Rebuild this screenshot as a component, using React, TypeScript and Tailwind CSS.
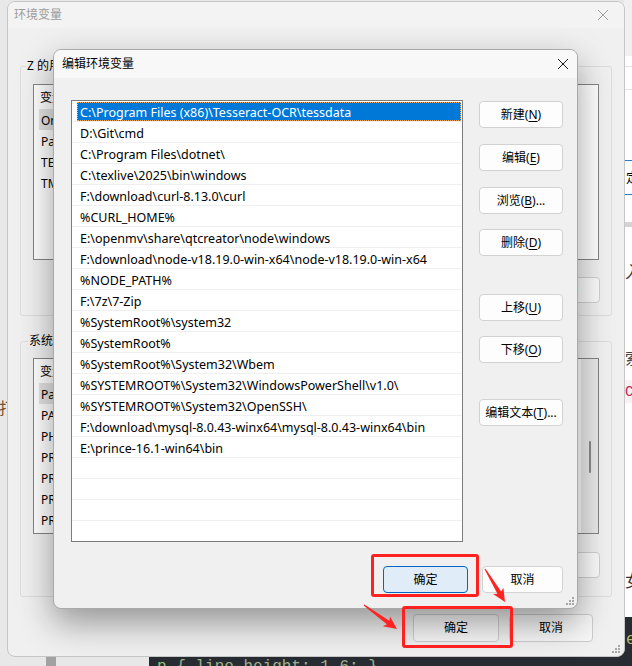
import React from 'react';

// path list of the edit dialog
const paths = [
  'C:\\Program Files (x86)\\Tesseract-OCR\\tessdata',
  'D:\\Git\\cmd',
  'C:\\Program Files\\dotnet\\',
  'C:\\texlive\\2025\\bin\\windows',
  'F:\\download\\curl-8.13.0\\curl',
  '%CURL_HOME%',
  'E:\\openmv\\share\\qtcreator\\node\\windows',
  'F:\\download\\node-v18.19.0-win-x64\\node-v18.19.0-win-x64',
  '%NODE_PATH%',
  'F:\\7z\\7-Zip',
  '%SystemRoot%\\system32',
  '%SystemRoot%',
  '%SystemRoot%\\System32\\Wbem',
  '%SYSTEMROOT%\\System32\\WindowsPowerShell\\v1.0\\',
  '%SYSTEMROOT%\\System32\\OpenSSH\\',
  'F:\\download\\mysql-8.0.43-winx64\\mysql-8.0.43-winx64\\bin',
  'E:\\prince-16.1-win64\\bin',
  '',
  '',
  '',
  '',
];

const userVars = ['OneDrive', 'Path', 'TEMP', 'TMP'];
const sysVars = ['Path', 'PATHEXT', 'PHP_HOME', 'PROCESSOR_ARCHITECTURE', 'PROCESSOR_IDENTIFIER', 'PROCESSOR_LEVEL', 'PROCESSOR_REVISION'];

const CloseX = ({ color }: { color: string }) => (
  <svg width="12" height="12" viewBox="0 0 12 12" className={color}>
    <path d="M1 1L11 11M11 1L1 11" stroke="currentColor" strokeWidth="1" fill="none" />
  </svg>
);

const Grip = () => (
  <svg width="8" height="8" viewBox="0 0 8 8">
    <g fill="#a6a6a6">
      <rect x="6" y="0" width="2" height="2" />
      <rect x="3" y="3" width="2" height="2" />
      <rect x="6" y="3" width="2" height="2" />
      <rect x="0" y="6" width="2" height="2" />
      <rect x="3" y="6" width="2" height="2" />
      <rect x="6" y="6" width="2" height="2" />
    </g>
  </svg>
);

const Btn = ({ text, k, tail = '', className = '' }: { text: string; k?: string; tail?: string; className?: string }) => (
  <div className={`flex items-center justify-center rounded-[4px] border text-[12px] leading-none ${className}`}>
    {text}
    {k && (
      <>
        (<span className="underline underline-offset-2">{k}</span>)
      </>
    )}
    {tail}
  </div>
);

const Arrow = ({ x1, y1, x2, y2 }: { x1: number; y1: number; x2: number; y2: number }) => {
  const L = Math.hypot(x2 - x1, y2 - y1);
  const ang = (Math.atan2(y2 - y1, x2 - x1) * 180) / Math.PI;
  const pts = `0,-0.6 ${L - 11},-2.2 ${L - 13},-6 ${L},0 ${L - 13},6 ${L - 11},2.2 0,0.6`;
  return <polygon points={pts} fill="#ff2424" transform={`translate(${x1} ${y1}) rotate(${ang})`} />;
};

const VarList = ({ rows, selected, scroll }: { rows: string[]; selected: number; scroll?: boolean }) => (
  <div className="h-[176px] border border-[#858585] bg-white flex overflow-hidden">
    <div className="flex-1 flex flex-col">
      <div className="h-[24px] shrink-0 flex items-center pl-[6px] pt-[1px]">
        <span className="w-[180px]">变量</span>
        <span>值</span>
      </div>
      {rows.map((r, i) => (
        <div key={r} className="h-[21px] shrink-0 flex pl-[5px]">
          <div className={`flex items-center pl-[2px] pt-[2px] w-[200px] ${i === selected ? 'bg-[#e3e3e3]' : ''}`}>{r}</div>
        </div>
      ))}
    </div>
    {scroll && (
      <div className="w-[17px] bg-[#e9e9e9] flex justify-center pt-[82px]">
        <div className="w-[2px] h-[32px] bg-[#8a8a8a] rounded-full" />
      </div>
    )}
  </div>
);

const BackBtn = 'w-[84px] h-[26px] border-[#d0d0d0] bg-[#fbfbfb]';

const BackWindow = () => (
  <div className="absolute left-[7px] top-[1px] w-[618px] h-[656px] rounded-[8px] border border-[#c6c6c6] bg-[#f0f0f0] overflow-hidden flex flex-col">
    <div className="h-[26px] shrink-0 flex items-center justify-between pl-[6px] pr-[15px] bg-[#f3f3f3] text-[#9b9b9b]">
      <span>环境变量</span>
      <CloseX color="text-[#a0a0a0]" />
    </div>
    <div className="flex flex-col px-[12px]">
      <div className="relative mt-[38px] h-[250px] border border-[#dcdcdc] rounded-[3px] px-[12px] pt-[17px]">
        <span className="absolute left-[5px] -top-[9px] bg-[#f0f0f0] px-[1px] leading-[16px]">Z 的用户变量(<span className="underline">U</span>)</span>
        <VarList rows={userVars} selected={0} />
        <div className="mt-[17px] flex justify-end gap-[8px] -mr-[1px]">
          <Btn text="新建" k="N" tail="..." className={BackBtn} />
          <Btn text="编辑" k="E" tail="..." className={BackBtn} />
          <Btn text="删除" k="D" className={BackBtn} />
        </div>
      </div>
      <div className="relative mt-[25px] h-[256px] border border-[#dcdcdc] rounded-[3px] px-[12px] pt-[16px]">
        <span className="absolute left-[7px] -top-[9px] bg-[#f0f0f0] px-[1px] leading-[16px]">系统变量(<span className="underline">S</span>)</span>
        <VarList rows={sysVars} selected={0} scroll />
        <div className="mt-[18px] flex justify-end gap-[8px] -mr-[1px]">
          <Btn text="新建" k="W" tail="..." className={BackBtn} />
          <Btn text="编辑" k="I" tail="..." className={BackBtn} />
          <Btn text="删除" k="L" className={BackBtn} />
        </div>
      </div>
      <div className="mt-[17px] flex justify-end gap-[10px] pr-[19px]">
        <Btn text="确定" className="w-[86px] h-[28px] border-[#cdcdcd] bg-[#f7f7f7]" />
        <Btn text="取消" className="w-[84px] h-[28px] border-[#cdcdcd] bg-[#f7f7f7]" />
      </div>
    </div>
    <div className="absolute right-[4px] bottom-[3px]">
      <Grip />
    </div>
  </div>
);

const SideBtn = 'w-[84px] h-[27px] border-[#d2d2d2] bg-[#fdfdfd]';

const FrontWindow = () => (
  <div className="absolute left-[53px] top-[49px] w-[525px] h-[560px] rounded-[8px] border border-[#a9a9a9] bg-[#f0f0f0] overflow-hidden flex flex-col shadow-[0_14px_34px_rgba(0,0,0,0.38)]">
    <div className="h-[28px] shrink-0 flex items-center justify-between pl-[8px] pr-[8px] bg-[#f8f8f8]">
      <span>编辑环境变量</span>
      <CloseX color="text-[#1a1a1a]" />
    </div>
    <div className="flex flex-col pt-[22px] pl-[17px] pr-[14px]">
      <div className="flex gap-[16px]">
        <div className="w-[392px] h-[442px] border border-[#7c7c7c] bg-white overflow-hidden flex flex-col text-[12.5px] leading-[17px]">
          {paths.map((p, i) =>
            i === 0 ? (
              <div key={i} className="h-[21px] shrink-0 border-b border-[#efefef] flex pl-[5px] pr-[1px]">
                <div className="mt-[1px] h-[19px] flex-1 flex items-center pl-[3px] pt-[2px] bg-[#0078d7] text-white outline-1 outline-dotted outline-[#f2a65a] -outline-offset-1 whitespace-nowrap">
                  {p}
                </div>
              </div>
            ) : (
              <div key={i} className="h-[21px] shrink-0 border-b border-[#efefef] flex items-center pl-[8px] pt-[3px] whitespace-nowrap">
                {p}
              </div>
            )
          )}
        </div>
        <div className="w-[84px] flex flex-col">
          <Btn text="新建" k="N" className={`mt-[1px] ${SideBtn}`} />
          <Btn text="编辑" k="E" className={`mt-[16px] ${SideBtn}`} />
          <Btn text="浏览" k="B" tail="..." className={`mt-[16px] ${SideBtn}`} />
          <Btn text="删除" k="D" className={`mt-[15px] ${SideBtn}`} />
          <Btn text="上移" k="U" className={`mt-[38px] ${SideBtn}`} />
          <Btn text="下移" k="O" className={`mt-[15px] ${SideBtn}`} />
          <Btn text="编辑文本" k="T" tail="..." className={`mt-[36px] ${SideBtn}`} />
        </div>
      </div>
      <div className="mt-[24px] flex justify-end gap-[14px]">
        <Btn text="确定" className="w-[85px] h-[27px] border-[#0067c0] bg-[#e0ecf8]" />
        <Btn text="取消" className="w-[81px] h-[27px] border-[#d2d2d2] bg-[#fdfdfd]" />
      </div>
    </div>
    <div className="absolute right-[3px] bottom-[3px]">
      <Grip />
    </div>
  </div>
);

// slivers of the browser page behind the dialogs
const RightPage = () => (
  <div className="absolute left-[624px] top-0 w-[40px] h-[617px] bg-white flex flex-col text-[14px] leading-none">
    <div className="h-[56px] shrink-0 bg-[#f0f0f0]" />
    <div className="h-[11px] shrink-0 border-b border-[#e3e3e3]" />
    <div className="h-[23px] shrink-0 border-b border-[#e3e3e3]" />
    <div className="h-[71px] shrink-0 border-b border-[#1f7fd8]" />
    <div className="h-[34px] shrink-0 border-b border-[#1f7fd8] flex items-center pl-[2px] text-[13px]">定义</div>
    <div className="h-[27px] shrink-0" />
    <div className="h-[5px] shrink-0 bg-[#d4d4d4]" />
    <div className="h-[35px] shrink-0" />
    <div className="h-[18px] shrink-0 flex items-center text-[17px] pl-[1px] text-[#333]">入</div>
    <div className="h-[69px] shrink-0" />
    <div className="h-[18px] shrink-0 flex items-center text-[16px] pl-[1px] text-[#444]">索</div>
    <div className="h-[13px] shrink-0" />
    <div className="h-[23px] shrink-0 bg-[#f9f2f4] flex items-center pl-[1px] text-[#c7254e] font-['Liberation_Mono',monospace]">C</div>
    <div className="h-[168px] shrink-0" />
    <div className="h-[18px] shrink-0 flex items-center text-[17px] pl-[1px] text-[#333]">女</div>
  </div>
);

const CodePanel = () => (
  <div className="absolute left-[149px] top-[617px] right-0 bottom-0 bg-[#272b32] font-['Liberation_Mono',monospace] text-[16px] leading-[20px] flex flex-col">
    <div className="h-[33px] shrink-0 pl-[477px] pt-[13px] text-[#b5bd68]">e1</div>
    <div className="pl-[8px] pt-[7px] text-[#9fb08c] whitespace-pre">
      <span className="text-[#98c379]">p</span> {'{'} line-height: 1.6; {'}'}
    </div>
  </div>
);

export default function App() {
  return (
    <div className="relative w-[632px] h-[666px] overflow-hidden bg-[#e8e8e8] font-['Noto_Sans','Noto_Sans_CJK_SC',sans-serif] text-[12px] text-black">
      <RightPage />
      <CodePanel />
      <div className="absolute left-[46px] top-[657px] w-[10px] h-[9px] bg-[#a2a2a2]" />
      <span className="absolute -left-[1px] top-[396px] text-[16px] text-[#7a5230]">打</span>
      <BackWindow />
      <FrontWindow />
      <div className="absolute left-[371px] top-[554px] w-[108px] h-[43px] rounded-[3px] border-[3px] border-[#ff2020]" />
      <div className="absolute left-[402px] top-[606px] w-[111px] h-[42px] rounded-[3px] border-[3px] border-[#ff2020]" />
      <svg className="absolute inset-0 pointer-events-none" width="632" height="666">
        <Arrow x1={364} y1={605} x2={397} y2={629} />
        <Arrow x1={485} y1={569} x2={505} y2={602} />
      </svg>
    </div>
  );
}
